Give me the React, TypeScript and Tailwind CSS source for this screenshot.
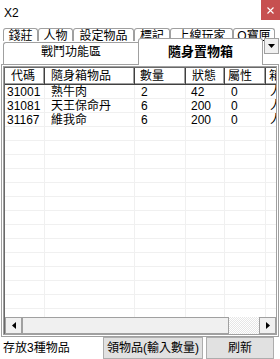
import React from 'react';

const font = { fontFamily: '"Liberation Sans", "Noto Sans CJK TC", sans-serif' };

// column widths measured off the list header
const columns = [
  { title: '代碼', w: 'w-[40px]', pad: 'pl-[2px]', hpad: 'pl-[6px]' },
  { title: '隨身箱物品', w: 'w-[90px]', pad: 'pl-[6px]', hpad: 'pl-[6px]' },
  { title: '數量', w: 'w-[51px]', pad: 'pl-[6px]', hpad: 'pl-[5px]' },
  { title: '狀態', w: 'w-[39px]', pad: 'pl-[5px]', hpad: 'pl-[6px]' },
  { title: '屬性', w: 'w-[41px]', pad: 'pl-[6px]', hpad: 'pl-[3px]' },
  { title: '箱子', w: 'w-[40px]', pad: 'pl-[4px]', hpad: 'pl-[3px]' },
];

const items = [
  ['31001', '熟牛肉', '2', '42', '0', '人物'],
  ['31081', '天王保命丹', '6', '200', '0', '人物'],
  ['31167', '維我命', '6', '200', '0', '人物'],
];

const topTabs = [
  { label: '錢莊', w: 'w-[35px]' },
  { label: '人物', w: 'w-[35px]' },
  { label: '設定物品', w: 'w-[61px]' },
  { label: '標記', w: 'w-[36px]' },
  { label: '上線玩家', w: 'w-[63px]' },
  { label: 'O寶匣', w: 'w-[42px]' },
];

function App() {
  const rows = [...items];
  while (rows.length < 17) rows.push(['', '', '', '', '', '']);

  return (
    <div className="w-[280px] h-[359px] bg-white text-black flex flex-col overflow-hidden text-[12px] leading-none" style={font}>
      {/* Title bar */}
      <div className="h-[22px] flex justify-between shrink-0">
        <span className="pl-[4px] pt-[7px] text-[12px]">X2</span>
        <div className="w-[19px] h-[20px] bg-[#c75050] flex items-center justify-center">
          <svg width="7" height="7" viewBox="0 0 7 7">
            <path d="M0.5 0.5 L6.5 6.5 M6.5 0.5 L0.5 6.5" stroke="#fff" strokeWidth="1.1" />
          </svg>
        </div>
      </div>

      {/* Tab row 1 (partly hidden by row 2) */}
      <div className="h-[19px] pt-[6px] pl-[3px] flex overflow-hidden shrink-0">
        {topTabs.map((t) => (
          <div
            key={t.label}
            className={`${t.w} h-[20px] shrink-0 border border-[#a0a0a0] border-b-0 rounded-t-[3px] bg-white flex justify-center pt-[1px] text-[12px]`}
          >
            {t.label}
          </div>
        ))}
      </div>

      {/* Tab row 2 */}
      <div className="h-[23px] pl-[3px] flex items-end shrink-0">
        <div className="w-[135px] h-[22px] border border-[#a0a0a0] border-b-0 border-r-0 rounded-tl-[3px] bg-white flex justify-center pt-[3px] text-[12px]">
          戰鬥功能區
        </div>
        <div className="relative z-10 -mb-px w-[125px] h-[27px] border border-[#a0a0a0] border-b-0 rounded-t-[3px] bg-white flex justify-center pt-[6px] font-bold text-[13px]">
          隨身置物箱
        </div>
        <div className="relative z-10 self-start -mt-[3px] ml-[1px] w-[15px] h-[16px] border border-[#a0a0a0] bg-[#f0f0f0] flex items-center justify-center">
          <svg width="7" height="4" viewBox="0 0 7 4">
            <path d="M0 0 H7 L3.5 4 Z" fill="#000" />
          </svg>
        </div>
      </div>

      {/* Tab page */}
      <div className="flex-1 min-h-0 mx-[1px] border border-[#a0a0a0] p-[1px] flex">
        <div className="flex-1 min-w-0 flex flex-col border border-[#a0a0a0] shadow-[inset_1px_1px_0_#696969] pl-[1px] pt-[1px] overflow-hidden bg-white">
          {/* list body */}
          <div className="flex-1 min-h-0 overflow-hidden">
            <div className="flex h-[17px]">
              {columns.map((c) => (
                <div
                  key={c.title}
                  className={`${c.w} shrink-0 h-full ${c.hpad} flex items-center border-r border-b border-[#404040] shadow-[inset_-1px_-1px_0_#a0a0a0,inset_1px_1px_0_#fff] whitespace-nowrap overflow-hidden`}
                >
                  {c.title}
                </div>
              ))}
            </div>
            {rows.map((r, i) => (
              <div key={i} className="flex h-[14px]">
                {columns.map((c, j) => (
                  <div
                    key={j}
                    className={`${c.w} shrink-0 h-full ${c.pad} flex items-center border-r border-b border-[#f0f0f0] whitespace-nowrap overflow-hidden`}
                  >
                    {r[j]}
                  </div>
                ))}
              </div>
            ))}
          </div>

          {/* horizontal scrollbar */}
          <div className="h-[17px] flex shrink-0">
            <div className="w-[17px] h-full border border-[#a0a0a0] bg-[#f0f0f0] flex items-center justify-center">
              <svg width="4" height="7" viewBox="0 0 4 7">
                <path d="M4 0 V7 L0 3.5 Z" fill="#000" />
              </svg>
            </div>
            <div className="w-[207px] h-full border border-[#a0a0a0] bg-[#f0f0f0]" />
            <div className="flex-1 h-full bg-[repeating-conic-gradient(#e6e6e6_0_25%,#ffffff_0_50%)] bg-[length:2px_2px]" />
            <div className="w-[17px] h-full border border-[#a0a0a0] bg-[#f0f0f0] flex items-center justify-center">
              <svg width="4" height="7" viewBox="0 0 4 7">
                <path d="M0 0 V7 L4 3.5 Z" fill="#000" />
              </svg>
            </div>
          </div>
        </div>
      </div>

      {/* Bottom bar */}
      <div className="h-[22px] flex items-center shrink-0">
        <span className="pl-[3px] w-[103px] text-[12px]">存放3種物品</span>
        <button className="w-[100px] h-[22px] border border-[#adadad] bg-[#e1e1e1] text-[12px] flex items-center justify-center">
          領物品(輸入數量)
        </button>
        <button className="ml-[3px] w-[68px] h-[22px] border border-[#adadad] bg-[#e1e1e1] text-[12px] flex items-center justify-center">
          刷新
        </button>
      </div>
    </div>
  );
}

export default App;
